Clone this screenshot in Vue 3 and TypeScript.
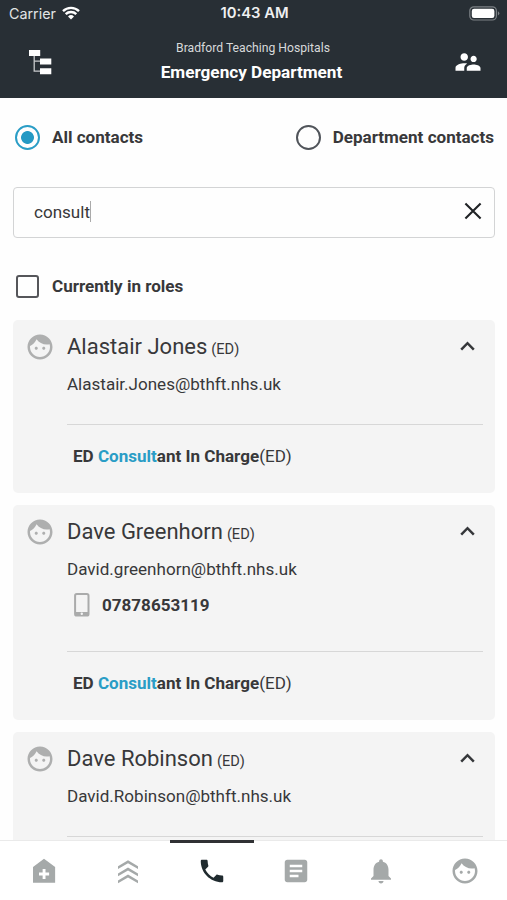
<script setup lang="ts">
import { ref } from 'vue'

interface Contact {
  name: string
  email: string
  phone?: string
}

const contacts: Contact[] = [
  { name: 'Alastair Jones', email: 'Alastair.Jones@bthft.nhs.uk' },
  { name: 'Dave Greenhorn', email: 'David.greenhorn@bthft.nhs.uk', phone: '07878653119' },
  { name: 'Dave Robinson', email: 'David.Robinson@bthft.nhs.uk' },
]

const query = ref('consult')

const facePath =
  'M9 11.75c-.69 0-1.25.56-1.25 1.25s.56 1.25 1.25 1.25 1.25-.56 1.25-1.25-.56-1.25-1.25-1.25zm6 0c-.69 0-1.25.56-1.25 1.25s.56 1.25 1.25 1.25 1.25-.56 1.25-1.25-.56-1.25-1.25-1.25zM12 2C6.48 2 2 6.48 2 12s4.48 10 10 10 10-4.48 10-10S17.52 2 12 2zm0 18c-4.41 0-8-3.59-8-8 0-.29.02-.58.05-.86 2.36-1.05 4.23-2.98 5.21-5.37C11.07 8.33 14.05 10 17.42 10c.78 0 1.53-.09 2.25-.26.21.71.33 1.47.33 2.26 0 4.41-3.59 8-8 8z'

const tabs = [
  { id: 'home', path: 'M12 2.2L3.2 8.7v12.6h17.7V8.700zM10.900 10.300h2.300v2.900h2.900v2.300h-2.900v2.900h-2.300v-2.900H8v-2.300h2.900z' },
  { id: 'escalate', path: 'M12 3.4l8 4.800v2.200l-8-4.600-8 4.600V8.200zM12 9.200l8 4.800v2.200l-8-4.600-8 4.600V14zM12 14.800l8 4.800v2.200l-8-4.600-8 4.600v-2.200z' },
  { id: 'calls', path: 'M6.62 10.79c1.44 2.83 3.76 5.14 6.59 6.59l2.2-2.2c.27-.27.67-.36 1.02-.24 1.12.37 2.33.57 3.57.57.55 0 1 .45 1 1V20c0 .55-.45 1-1 1-9.39 0-17-7.61-17-17 0-.55.45-1 1-1h3.5c.55 0 1 .45 1 1 0 1.25.2 2.45.57 3.57.11.35.03.74-.25 1.02l-2.2 2.2z' },
  { id: 'notes', path: 'M19 3H5c-1.1 0-2 .9-2 2v14c0 1.1.9 2 2 2h14c1.1 0 2-.9 2-2V5c0-1.1-.9-2-2-2zm-5 14H7v-2h7v2zm3-4H7v-2h10v2zm0-4H7V7h10v2z' },
  { id: 'alerts', path: 'M12 22c1.1 0 2-.9 2-2h-4c0 1.1.89 2 2 2zm6-6v-5c0-3.07-1.64-5.64-4.5-6.32V4c0-.83-.67-1.5-1.5-1.5s-1.5.67-1.5 1.5v.68C7.63 5.36 6 7.92 6 11v5l-2 2v1h16v-1l-2-2z' },
  { id: 'profile', path: facePath },
]
</script>

<template>
  <div class="screen">
    <header class="header">
      <div class="status">
        <div class="carrier">
          <span>Carrier</span>
          <svg class="wifi" viewBox="0 0 18 14">
            <path d="M1 5.1a11.500 11.500 0 0 1 16 0M3.700 8.100a7.600 7.600 0 0 1 10.600 0" />
            <path class="wifi-dot" d="M9 13.6l-3-3.100a4.300 4.300 0 0 1 6 0z" />
          </svg>
        </div>
        <span class="time">10:43 AM</span>
        <svg class="battery" viewBox="0 0 31 15">
          <rect class="battery-shell" x=".8" y=".8" width="26.6" height="13.2" rx="4" />
          <rect x="2.8" y="2.8" width="22.6" height="9.2" rx="2.2" fill="#fff" />
          <path d="M28.9 5.2q3 2.200 0 4.400z" fill="#7c8185" />
        </svg>
      </div>
      <div class="titlebar">
        <svg class="tree" viewBox="0 0 24 26">
          <path class="tree-line" d="M6.2 7v15.200h6M6.200 12.200h6" />
          <path d="M1 1h11.200v6H1zM12 9.500h11.300v6H12zM12 19.200h11.300v6H12z" fill="#fff" />
        </svg>
        <div class="titles">
          <div class="org">Bradford Teaching Hospitals</div>
          <h1>Emergency Department</h1>
        </div>
        <svg class="people" viewBox="0 0 24 24">
          <path d="M16.5 12c1.38 0 2.49-1.12 2.49-2.5S17.88 7 16.5 7C15.12 7 14 8.12 14 9.5s1.12 2.5 2.5 2.5zM9 11c1.66 0 2.99-1.34 2.99-3S10.66 5 9 5C7.34 5 6 6.34 6 8s1.34 3 3 3zm7.5 3c-1.83 0-5.5.92-5.5 2.75V19h11v-2.25c0-1.83-3.67-2.75-5.5-2.75zM9 13c-2.33 0-7 1.17-7 3.5V19h7v-2.25c0-.85.33-2.34 2.37-3.47C10.5 13.1 9.66 13 9 13z" />
        </svg>
      </div>
    </header>

    <main class="content">
      <div class="scope">
        <div class="option">
          <span class="radio selected"></span>
          <span class="label">All contacts</span>
        </div>
        <div class="option">
          <span class="radio"></span>
          <span class="label">Department contacts</span>
        </div>
      </div>

      <div class="search">
        <span class="query">{{ query }}</span>
        <span class="caret"></span>
        <svg class="clear" viewBox="0 0 18 18" @click="query = ''">
          <path d="M1.4 1.4l15.200 15.200M16.600 1.400L1.400 16.600" />
        </svg>
      </div>

      <div class="option roles">
        <span class="checkbox"></span>
        <span class="label">Currently in roles</span>
      </div>

      <section class="list">
        <article v-for="c in contacts" :key="c.name" class="card">
          <svg class="face" viewBox="0 0 24 24"><path :d="facePath" /></svg>
          <div class="body">
            <div class="heading">
              <div><span class="name">{{ c.name }}</span><span class="dept">(ED)</span></div>
              <svg class="chevron" viewBox="0 0 15 10"><path d="M1.2 8.600L7.500 2.200l6.300 6.400" /></svg>
            </div>
            <div class="email">{{ c.email }}</div>
            <div v-if="c.phone" class="phone">
              <svg class="mobile" viewBox="0 0 16 24">
                <rect x="1.1" y="1.1" width="13.4" height="21.4" rx="1.6" />
                <path class="mobile-base" d="M1 19h13.600v3.500H1z" />
                <circle cx="7.8" cy="20.8" r="1.2" />
              </svg>
              <b>{{ c.phone }}</b>
            </div>
            <div class="role"><b>ED <mark>Consult</mark>ant In Charge</b>(ED)</div>
          </div>
        </article>
      </section>
    </main>

    <nav class="tabs">
      <div v-for="t in tabs" :key="t.id" class="tab" :class="{ active: t.id === 'calls' }">
        <svg viewBox="0 0 24 24"><path :d="t.path" fill-rule="evenodd" /></svg>
      </div>
    </nav>
  </div>
</template>

<style>
body {
  margin: 0;
  overflow: hidden;
}
</style>

<style scoped>
.screen {
  width: 507px;
  height: 900px;
  display: flex;
  flex-direction: column;
  overflow: hidden;
  background: #fefefe;
  color: #38383a;
  font-family: Roboto, sans-serif;
  font-size: 17.06px;
}
svg { display: block; flex: none; }
.header {
  flex: none;
  height: 98px;
  background: #282f35;
  color: #fff;
}
.status {
  height: 28px;
  box-sizing: border-box;
  padding: 0 7px 2px 9px;
  display: grid;
  grid-template-columns: 1fr auto 1fr;
  align-items: center;
  font-family: Inter, sans-serif;
  font-size: 14.3px;
}
.carrier { display: flex; align-items: center; gap: 6px; color: #e2e4e5; }
.wifi { width: 18px; height: 14px; margin-top: -1px; fill: none; stroke: #fff; stroke-width: 2.4; }
.wifi-dot { fill: #fff; stroke: none; }
.time { font-weight: 600; font-size: 14.8px; color: #eff0f1; }
.battery { width: 31px; height: 15px; justify-self: end; }
.battery-shell { fill: none; stroke: #7c8185; stroke-width: 1.2; }
.titlebar {
  height: 70px;
  box-sizing: border-box;
  padding: 0 24px 0 28px;
  display: flex;
  justify-content: space-between;
  align-items: flex-start;
}
.tree { width: 24px; height: 26px; margin-top: 21px; }
.tree-line { fill: none; stroke: #c6c9cb; stroke-width: 1.3; }
.titles { padding: 12px 2px 0 0; text-align: center; }
.org { padding-left: 3px; font-size: 12.2px; line-height: 17px; color: #d7d9da; }
h1 { margin: 4px 0 0; font-size: 17.15px; line-height: 22px; font-weight: 700; }
.people { width: 30px; height: 30px; margin-top: 19px; fill: #fff; }
.content {
  flex: 1;
  min-height: 0;
  overflow: hidden;
  padding: 0 12px 0 13px;
}
.scope {
  height: 89px;
  box-sizing: border-box;
  padding: 26px 1px 0 2px;
  display: flex;
  justify-content: space-between;
}
.option { display: flex; align-items: center; height: 27px; }
.label { padding-bottom: 1px; font-weight: 700; }
.radio {
  box-sizing: border-box;
  width: 25px;
  height: 25px;
  margin-right: 12px;
  border: 2px solid #50545a;
  border-radius: 50%;
}
.radio.selected {
  border-color: #2a9dc6;
  background: radial-gradient(circle, #2499c4 6px, transparent 6.8px);
}
.search {
  box-sizing: border-box;
  height: 51px;
  display: flex;
  align-items: center;
  padding: 0 12px 2px 20px;
  border: 1.5px solid #d3d4d5;
  border-radius: 4px;
}
.caret { width: 1px; height: 21px; background: #aaa; }
.clear { width: 18px; height: 18px; margin: 0 0 1px auto; fill: none; stroke: #202326; stroke-width: 2.1; }
.roles { margin-top: 35px; padding-left: 3px; }
.roles .label { padding-bottom: 2px; }
.checkbox {
  box-sizing: border-box;
  width: 23px;
  height: 23px;
  margin-right: 13px;
  border: 2px solid #55565a;
  border-radius: 3px;
}
.list { margin-top: 20px; }
.card {
  display: flex;
  margin-bottom: 12px;
  padding: 12px 12px 25px;
  border-radius: 5px;
  background: #f4f4f4;
}
.face { width: 30px; height: 30px; fill: #aeafaf; }
.body { flex: 1; padding-left: 12px; }
.heading {
  display: flex;
  align-items: center;
  justify-content: space-between;
  height: 28px;
  padding: 0 8px 2px 0;
}
.name { font-size: 22px; }
.dept { margin-left: 4px; font-size: 14.6px; }
.chevron { width: 15px; height: 10px; fill: none; stroke: #35373a; stroke-width: 2.5; }
.email { margin-top: 10px; line-height: 24px; }
.phone { display: flex; align-items: center; gap: 12px; height: 25px; margin-top: 11px; padding-left: 7px; }
.mobile { width: 16px; height: 24px; fill: none; stroke: #aaabab; stroke-width: 2; }
.mobile-base { fill: #aaabab; stroke: none; }
.mobile circle { fill: #f4f4f4; stroke: none; }
.role {
  margin-top: 28px;
  padding: 19px 0 0 6px;
  border-top: 1px solid #d7d7d7;
  line-height: 24px;
}
.phone + .role { margin-top: 34px; }
mark { background: none; color: #2a9dc6; }
.tabs {
  flex: none;
  height: 60px;
  box-sizing: border-box;
  display: grid;
  grid-template-columns: repeat(6, 1fr);
  padding-left: 1.5px;
  border-top: 1px solid #eaeaea;
  background: #fff;
}
.tab { display: flex; justify-content: center; padding-top: 15px; fill: #a5a9a9; }
.tab svg { width: 30px; height: 30px; }
.tab.active { margin-top: -1px; padding-top: 13px; border-top: 3px solid #303134; fill: #202b2f; }
</style>
